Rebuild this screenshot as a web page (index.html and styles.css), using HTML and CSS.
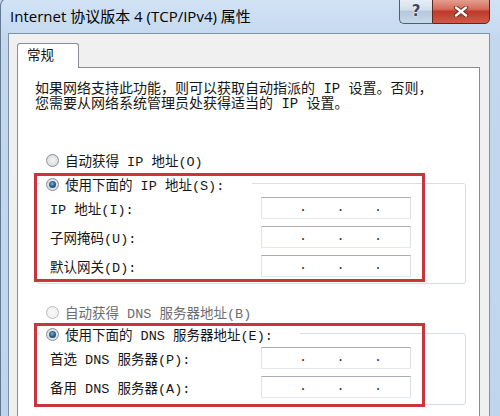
FILE: index.html
```html
<!DOCTYPE html>
<html lang="zh-CN">
<head>
    <meta charset="UTF-8">
    <title>Internet 协议版本 4 (TCP/IPv4) 属性</title>
    <link rel="stylesheet" href="styles.css">
</head>
<body>
<div class="window">
    <div class="titlebar">
        <span class="title">Internet 协议版本 4 (TCP/IPv4) 属性</span>
        <div class="caption-buttons">
            <button class="btn-help">?</button>
            <button class="btn-close">
                <svg width="16" height="11" viewBox="0 0 16 11">
                    <path d="M3 1.5 L13 9.5 M13 1.5 L3 9.5" stroke="#6b2a22" stroke-width="4.2" stroke-linecap="round"/>
                    <path d="M3 1.5 L13 9.5 M13 1.5 L3 9.5" stroke="#fff" stroke-width="2.4" stroke-linecap="round"/>
                </svg>
            </button>
        </div>
    </div>

    <div class="client">
        <div class="tabs">
            <div class="tab">常规</div>
        </div>
        <div class="panel">
            <p class="intro">如果网络支持此功能，则可以获取自动指派的 IP 设置。否则，<br>您需要从网络系统管理员处获得适当的 IP 设置。</p>

            <div class="radio-row"><span class="radio"></span>自动获得 IP 地址(O)</div>
            <div class="group group-ip">
                <div class="legend"><span class="radio checked"></span>使用下面的 IP 地址(S):</div>
                <div class="field"><span class="field-label">IP 地址(I):</span><div class="ip"><span>.</span><span>.</span><span>.</span></div></div>
                <div class="field"><span class="field-label">子网掩码(U):</span><div class="ip"><span>.</span><span>.</span><span>.</span></div></div>
                <div class="field"><span class="field-label">默认网关(D):</span><div class="ip"><span>.</span><span>.</span><span>.</span></div></div>
            </div>

            <div class="radio-row disabled"><span class="radio"></span>自动获得 DNS 服务器地址(B)</div>
            <div class="group group-dns">
                <div class="legend"><span class="radio checked"></span>使用下面的 DNS 服务器地址(E):</div>
                <div class="field"><span class="field-label">首选 DNS 服务器(P):</span><div class="ip"><span>.</span><span>.</span><span>.</span></div></div>
                <div class="field"><span class="field-label">备用 DNS 服务器(A):</span><div class="ip"><span>.</span><span>.</span><span>.</span></div></div>
            </div>
        </div>
    </div>
</div>
</body>
</html>
```

FILE: styles.css
```css
html, body {
    margin: 0;
    height: 100%;
}

body {
    background: #c3d8ef;
    overflow: hidden;
    font-family: "Liberation Mono", "Noto Sans CJK SC", monospace;
    font-size: 13.5px;
    color: #161616;
}

.window {
    width: 500px;
    height: 419px;
    margin-top: -3px;
    box-sizing: border-box;
    border-left: 1px solid #64788f;
    border-top: 1px solid #64788f;
    border-top-left-radius: 9px;
    background: linear-gradient(to bottom, #d2e3f5, #c3d8ef 40px, #bfd5ee);
    display: flex;
    flex-direction: column;
}

.titlebar {
    height: 35px;
    flex-shrink: 0;
    display: flex;
    align-items: flex-start;
    padding-left: 9px;
}

.title {
    margin-top: 8px;
    font-family: "Open Sans", "Noto Sans CJK SC", sans-serif;
    font-size: 15px;
    line-height: 20px;
    color: #000;
}

.caption-buttons {
    margin-left: auto;
    margin-right: 10px;
    display: flex;
}

.caption-buttons button {
    height: 26px;
    margin: 0;
    padding: 0;
    display: flex;
    align-items: center;
    justify-content: center;
    box-sizing: border-box;
}

.btn-help {
    width: 33px;
    border: 1px solid #4d5f78;
    border-right: none;
    border-radius: 0 0 0 5px;
    background: linear-gradient(to bottom, #e9eff7 0%, #d3deeb 45%, #b7c8dc 52%, #c9d8e9 100%);
    font-family: "DejaVu Sans", sans-serif;
    font-weight: bold;
    font-size: 15px;
    color: #3a4a60;
    text-shadow: 0 0 2px #fff, 0 0 1px #fff;
    padding-top: 1px;
}

.btn-close {
    width: 58px;
    border: 1px solid #5e2720;
    border-radius: 0 0 5px 0;
    background: linear-gradient(to bottom, #e6a396 0%, #d46d5b 42%, #bf3a2a 52%, #cf5a45 100%);
}

.client {
    flex: 1;
    margin: 0 10px 0 7px;
    border: 1px solid #7f92aa;
    border-bottom: none;
    background: #f0f0f0;
    padding: 9px 0 0 8px;
    display: flex;
    flex-direction: column;
}

.tabs {
    display: flex;
}

.tab {
    width: 62px;
    height: 25px;
    box-sizing: border-box;
    margin-bottom: -1px;
    position: relative;
    z-index: 1;
    border: 1px solid #898c95;
    border-bottom: none;
    border-radius: 3px 3px 0 0;
    background: #fff;
    padding: 3px 0 0 9px;
    font-size: 13.5px;
    line-height: 20px;
}

.panel {
    flex: 1;
    width: 463px;
    box-sizing: border-box;
    border: 1px solid #898c95;
    border-bottom: none;
    background: #fff;
    padding-left: 17px;
}

.intro {
    margin: 14px 0 0;
    font-size: 14px;
    line-height: 15px;
}

.radio-row {
    margin: 38px 0 0 11px;
    height: 20px;
    display: flex;
    align-items: center;
    gap: 6px;
}

.radio-row.disabled {
    margin-top: 18px;
    color: #6d6d6d;
}

.radio {
    width: 13px;
    height: 13px;
    box-sizing: border-box;
    border-radius: 50%;
    border: 1px solid #8c8f93;
    background: radial-gradient(circle at 50% 50%, #f4f4f4 0, #e2e3e4 55%, #cfd1d3 100%);
    display: flex;
    align-items: center;
    justify-content: center;
    flex-shrink: 0;
}

.disabled .radio {
    border-color: #b9b9b9;
    background: radial-gradient(circle at 50% 50%, #fafafa 0, #ececec 100%);
}

.radio.checked::after {
    content: "";
    width: 7px;
    height: 7px;
    border-radius: 50%;
    background: radial-gradient(circle at 45% 40%, #7fb3d9 0, #2a6296 45%, #15375f 100%);
}

.group {
    position: relative;
    width: 430px;
    box-sizing: border-box;
    margin: 13px 0 0 1px;
    border: 1px solid #d5dfe5;
    border-radius: 3px;
    padding-bottom: 6px;
}

.group-dns {
    margin-top: 11px;
}

.group::after {
    content: "";
    position: absolute;
    left: -3px;
    top: -11px;
    width: 391px;
    box-sizing: border-box;
    border: 3px solid #c8353c;
}

.group-ip::after {
    height: 109px;
}

.group-dns::after {
    height: 84px;
}

.legend {
    margin: -10px 0 0 3px;
    width: 212px;
    height: 20px;
    box-sizing: border-box;
    padding-left: 6px;
    background: #fff;
    display: flex;
    align-items: center;
    gap: 6px;
    white-space: nowrap;
}

.group-dns .legend {
    width: 260px;
}

.field {
    display: flex;
    align-items: center;
    padding-left: 13px;
    margin-top: 7px;
}

.legend + .field {
    margin-top: 3px;
}

.field-label {
    width: 211px;
}

.ip {
    width: 150px;
    height: 22px;
    box-sizing: border-box;
    border: 1px solid;
    border-color: #abadb3 #dbdfe6 #e3e9ef #e2e3ea;
    background: #fff;
    display: flex;
    gap: 29.5px;
    padding-left: 37px;
    line-height: 19px;
    color: #333;
}

.ip span {
    width: 8px;
    text-align: center;
}
```
